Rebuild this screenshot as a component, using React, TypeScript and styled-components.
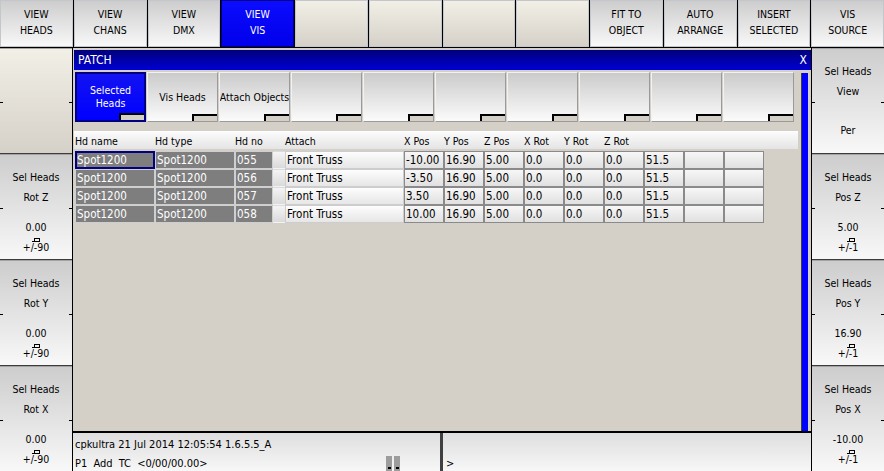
import * as React from 'react'
import styled, { createGlobalStyle, css } from 'styled-components'

const uiFont = `"DejaVu Sans Condensed", "DejaVu Sans", "Liberation Sans", sans-serif`

const GlobalStyle = createGlobalStyle`
  html, body {
    margin: 0;
    padding: 0;
    background: #d4d0c8;
  }
  body {
    font-family: ${uiFont};
    font-stretch: condensed;
    font-size: 10.5px;
    color: #000;
  }
  * {
    box-sizing: border-box;
  }
`

type Tone = 'gray' | 'blank' | 'active'

const grayFill = css`
  background: linear-gradient(#cdcdcd, #f8f8f8);
`
const blankFill = css`
  background: linear-gradient(#f2efe6, #d5d1c9);
`

const topButtons: { lines: string[]; tone: Tone }[] = [
  { lines: ['VIEW', 'HEADS'], tone: 'gray' },
  { lines: ['VIEW', 'CHANS'], tone: 'gray' },
  { lines: ['VIEW', 'DMX'], tone: 'gray' },
  { lines: ['VIEW', 'VIS'], tone: 'active' },
  { lines: [], tone: 'blank' },
  { lines: [], tone: 'blank' },
  { lines: [], tone: 'blank' },
  { lines: [], tone: 'blank' },
  { lines: ['FIT TO', 'OBJECT'], tone: 'gray' },
  { lines: ['AUTO', 'ARRANGE'], tone: 'gray' },
  { lines: ['INSERT', 'SELECTED'], tone: 'gray' },
  { lines: ['VIS', 'SOURCE'], tone: 'gray' },
]

type SideItem = { head?: string; sub?: string; value?: string; range?: string; late?: boolean }

const leftItems: SideItem[] = [
  {},
  { head: 'Sel Heads', sub: 'Rot Z', value: '0.00', range: '90' },
  { head: 'Sel Heads', sub: 'Rot Y', value: '0.00', range: '90' },
  { head: 'Sel Heads', sub: 'Rot X', value: '0.00', range: '90' },
]

const rightItems: SideItem[] = [
  { head: 'Sel Heads', sub: 'View', value: 'Per', late: true },
  { head: 'Sel Heads', sub: 'Pos Z', value: '5.00', range: '1' },
  { head: 'Sel Heads', sub: 'Pos Y', value: '16.90', range: '1' },
  { head: 'Sel Heads', sub: 'Pos X', value: '-10.00', range: '1' },
]

const tabs = [
  ['Selected', 'Heads'],
  ['Vis Heads'],
  ['Attach Objects'],
  [],
  [],
  [],
  [],
  [],
  [],
  [],
]

type Kind = 'dark' | 'spacer' | 'attach' | 'num'

const columns: { title: string; w: number; kind: Kind }[] = [
  { title: 'Hd name', w: 80, kind: 'dark' },
  { title: 'Hd type', w: 80, kind: 'dark' },
  { title: 'Hd no', w: 38, kind: 'dark' },
  { title: '', w: 12, kind: 'spacer' },
  { title: 'Attach', w: 119, kind: 'attach' },
  { title: 'X Pos', w: 40, kind: 'num' },
  { title: 'Y Pos', w: 40, kind: 'num' },
  { title: 'Z Pos', w: 40, kind: 'num' },
  { title: 'X Rot', w: 40, kind: 'num' },
  { title: 'Y Rot', w: 40, kind: 'num' },
  { title: 'Z Rot', w: 40, kind: 'num' },
  { title: '', w: 40, kind: 'num' },
  { title: '', w: 40, kind: 'num' },
  { title: '', w: 40, kind: 'num' },
]

const rows = [
  ['Spot1200', 'Spot1200', '055', '', 'Front Truss', '-10.00', '16.90', '5.00', '0.0', '0.0', '0.0', '51.5', '', ''],
  ['Spot1200', 'Spot1200', '056', '', 'Front Truss', '-3.50', '16.90', '5.00', '0.0', '0.0', '0.0', '51.5', '', ''],
  ['Spot1200', 'Spot1200', '057', '', 'Front Truss', '3.50', '16.90', '5.00', '0.0', '0.0', '0.0', '51.5', '', ''],
  ['Spot1200', 'Spot1200', '058', '', 'Front Truss', '10.00', '16.90', '5.00', '0.0', '0.0', '0.0', '51.5', '', ''],
]

const App: React.FunctionComponent = () => (
  <Screen>
    <GlobalStyle />
    <TopBar>
      {topButtons.map((b, i) => (
        <TopButton key={i} $tone={b.tone}>
          {b.lines.map((l) => (
            <span key={l}>{l}</span>
          ))}
        </TopButton>
      ))}
    </TopBar>
    <Body>
      <SideColumn $side="left">
        {leftItems.map((item, i) => (
          <SideButton key={i} item={item} />
        ))}
      </SideColumn>
      <Main>
        <TitleBar>
          <span>PATCH</span>
          <span>X</span>
        </TitleBar>
        <Work>
          <Content>
            <TabRow>
              {tabs.map((t, i) => (
                <Tab key={i} $active={i === 0}>
                  {t.map((l) => (
                    <span key={l}>{l}</span>
                  ))}
                </Tab>
              ))}
            </TabRow>
            <HeaderRow>
              {columns.map((c, i) => (
                <HeadCell key={i} $w={c.w}>
                  {c.title}
                </HeadCell>
              ))}
            </HeaderRow>
            <Rows>
              {rows.map((r, ri) => (
                <Row key={ri}>
                  {r.map((v, ci) => (
                    <Cell
                      key={ci}
                      $w={columns[ci].w}
                      $kind={columns[ci].kind}
                      $selected={ri === 0 && ci === 0}
                    >
                      {v}
                    </Cell>
                  ))}
                </Row>
              ))}
            </Rows>
          </Content>
          <Scrollbar />
        </Work>
        <StatusBar>
          <StatusLeft>
            <StatusLine>cpkultra 21 Jul 2014 12:05:54 1.6.5.5_A</StatusLine>
            <StatusLine $wide>
              <span>P1 Add TC &lt;0/00/00.00&gt;</span>
              <PauseIcon width="16" height="15" viewBox="0 0 16 15">
                <rect x="0" y="0" width="6" height="15" fill="#9c9c9c" />
                <rect x="8" y="0" width="6" height="15" fill="#9c9c9c" />
                <rect x="2" y="11" width="3" height="2" fill="#000" />
                <rect x="10" y="11" width="3" height="2" fill="#000" />
              </PauseIcon>
            </StatusLine>
          </StatusLeft>
          <StatusDivider />
          <StatusRight>
            <StatusLine />
            <StatusLine>&gt;</StatusLine>
          </StatusRight>
        </StatusBar>
      </Main>
      <SideColumn $side="right">
        {rightItems.map((item, i) => (
          <SideButton key={i} item={item} />
        ))}
      </SideColumn>
    </Body>
  </Screen>
)

const SideButton: React.FunctionComponent<{ item: SideItem }> = ({ item }) => (
  <SideCell $blank={!item.head}>
    {item.head && <SideLabel>{item.head}</SideLabel>}
    {item.sub && <SideLabel>{item.sub}</SideLabel>}
    {item.value && <SideValue $late={item.late}>{item.value}</SideValue>}
    {item.range && (
      <SideRange>
        +<Slash>/</Slash>-{item.range}
      </SideRange>
    )}
  </SideCell>
)

const Screen = styled.div`
  width: 884px;
  height: 471px;
  display: flex;
  flex-direction: column;
  overflow: hidden;
  background: #d4d0c8;
`

const TopBar = styled.div`
  height: 48px;
  display: grid;
  grid-template-columns: repeat(12, 1fr);
  gap: 1px;
  background: #000;
  border-bottom: 1px solid #000;
`

const TopButton = styled.div<{ $tone: Tone }>`
  display: flex;
  flex-direction: column;
  align-items: center;
  justify-content: center;
  padding-bottom: 3px;
  line-height: 16px;
  font-size: 10.5px;
  border: 1px solid #c3c7cb;
  ${(p) => (p.$tone === 'blank' ? blankFill : grayFill)}
  ${(p) =>
    p.$tone === 'active' &&
    css`
      background: linear-gradient(#0c0cff, #0000ea);
      border-color: #000080;
      color: #fff;
    `}
`

const Body = styled.div`
  flex: 1;
  display: flex;
  min-height: 0;
`

const SideColumn = styled.div<{ $side: 'left' | 'right' }>`
  width: 73px;
  display: grid;
  grid-template-rows: repeat(4, 1fr);
  gap: 1px;
  background: #3c3c3c;
  ${(p) => (p.$side === 'left' ? 'border-right: 1px solid #000;' : 'border-left: 1px solid #000;')}
`

const SideCell = styled.div<{ $blank: boolean }>`
  position: relative;
  display: flex;
  flex-direction: column;
  align-items: center;
  padding-top: 12px;
  border-top: 1px solid #a4a4a4;
  ${(p) => (p.$blank ? blankFill : grayFill)}

  &::before,
  &::after {
    content: '';
    position: absolute;
    top: 53px;
    width: 3px;
    height: 1px;
    background: #000;
  }
  &::before {
    left: 0;
  }
  &::after {
    right: 0;
  }
`

const SideLabel = styled.div`
  line-height: 20px;
  font-size: 10.5px;
`

const SideValue = styled.div<{ $late?: boolean }>`
  margin-top: ${(p) => (p.$late ? 19 : 10)}px;
  line-height: 20px;
`

const SideRange = styled.div`
  line-height: 20px;
`

const Slash = styled.span`
  position: relative;
  display: inline-block;

  &::before {
    content: '';
    position: absolute;
    left: 3px;
    top: 1px;
    width: 4px;
    height: 3px;
    border: 1px solid #000;
    border-bottom: none;
  }
  &::after {
    content: '';
    position: absolute;
    left: 1px;
    top: 4px;
    width: 8px;
    height: 1px;
    background: #000;
  }
`

const Main = styled.div`
  flex: 1;
  display: flex;
  flex-direction: column;
  padding-top: 2px;
  background: #d4d0c8;
  min-width: 0;
`

const TitleBar = styled.div`
  height: 20px;
  margin-left: 1px;
  display: flex;
  align-items: center;
  justify-content: space-between;
  padding: 0 4px 0 4px;
  background: linear-gradient(#00007c, #0000d4);
  color: #fff;
  font-size: 12px;
`

const Work = styled.div`
  flex: 1;
  display: flex;
  min-height: 0;
`

const Content = styled.div`
  width: 724px;
  margin-left: 1px;
  padding-top: 2px;
`

const TabRow = styled.div`
  height: 50px;
  display: flex;
  gap: 1px;
  padding-left: 1px;
`

const Tab = styled.div<{ $active: boolean }>`
  position: relative;
  width: 71px;
  height: 50px;
  display: flex;
  flex-direction: column;
  align-items: center;
  justify-content: center;
  line-height: 13px;
  white-space: nowrap;
  overflow: hidden;
  border: 1px solid;
  border-color: #f2f2f2 #9a9a9a #9a9a9a #f2f2f2;
  background: linear-gradient(#cbcbcb, #fbfbfb);
  ${(p) =>
    p.$active &&
    css`
      border: 2px solid #000080;
      background: linear-gradient(#1212f2, #0000ff);
      color: #fff;
    `}

  &::after {
    content: '';
    position: absolute;
    right: -2px;
    bottom: -2px;
    width: 25px;
    height: 7px;
    background: #d4d0c8;
    border-top: 2px solid #000;
    border-left: 2px solid #000;
  }
`

const HeaderRow = styled.div`
  height: 18px;
  margin-top: 9px;
  display: flex;
  align-items: center;
  padding-left: 1px;
  background: linear-gradient(#fbfbfb, #e4e4e4);
  border-top: 1px solid #fff;
`

const HeadCell = styled.div<{ $w: number }>`
  width: ${(p) => p.$w}px;
  flex: none;
  white-space: nowrap;
`

const Rows = styled.div`
  margin-top: 2px;
  padding-left: 1px;
  display: flex;
  flex-direction: column;
`

const Row = styled.div`
  display: flex;
  height: 18px;
`

const Cell = styled.div<{ $w: number; $kind: Kind; $selected: boolean }>`
  width: ${(p) => p.$w}px;
  flex: none;
  height: 18px;
  padding-left: 1px;
  font-size: 11.5px;
  line-height: 16px;
  white-space: nowrap;
  overflow: hidden;
  border: 1px solid #8a8a8a;
  background: linear-gradient(#f7f7f7, #e0e0e0);
  ${(p) =>
    p.$kind === 'dark' &&
    css`
      background: #7e7e7e;
      border-color: #cfcfcf;
      color: #fff;
    `}
  ${(p) =>
    p.$kind === 'attach' &&
    css`
      background: linear-gradient(#fdfdfd, #e6e6e6);
      border-color: #cdcdcd;
    `}
  ${(p) =>
    p.$kind === 'spacer' &&
    css`
      background: linear-gradient(#f4f4f4, #dadada);
      border-color: transparent;
    `}
  ${(p) =>
    p.$selected &&
    css`
      border: 2px solid #000080;
      padding-left: 0;
      line-height: 14px;
    `}
`

const Scrollbar = styled.div`
  width: 7px;
  margin: 3px 3px 0 3px;
  background: #0000ff;
  border-left: 1px solid #404040;
`

const StatusBar = styled.div`
  height: 40px;
  display: flex;
  border-top: 2px solid #000;
  font-size: 11px;
`

const StatusLeft = styled.div`
  width: 367px;
  padding: 2px 0 0 2px;
  background: linear-gradient(#dedede, #f7f7f7);
`

const StatusRight = styled.div`
  flex: 1;
  padding: 2px 0 0 3px;
  background: linear-gradient(#dedede, #f7f7f7);
`

const StatusDivider = styled.div`
  width: 3px;
  background: #404040;
`

const StatusLine = styled.div<{ $wide?: boolean }>`
  height: 19px;
  display: flex;
  align-items: center;
  justify-content: space-between;
  word-spacing: ${(p) => (p.$wide ? 3 : 0)}px;
  white-space: nowrap;
`

const PauseIcon = styled.svg`
  align-self: flex-end;
  margin-right: 38px;
  margin-bottom: 2px;
`

export default App
